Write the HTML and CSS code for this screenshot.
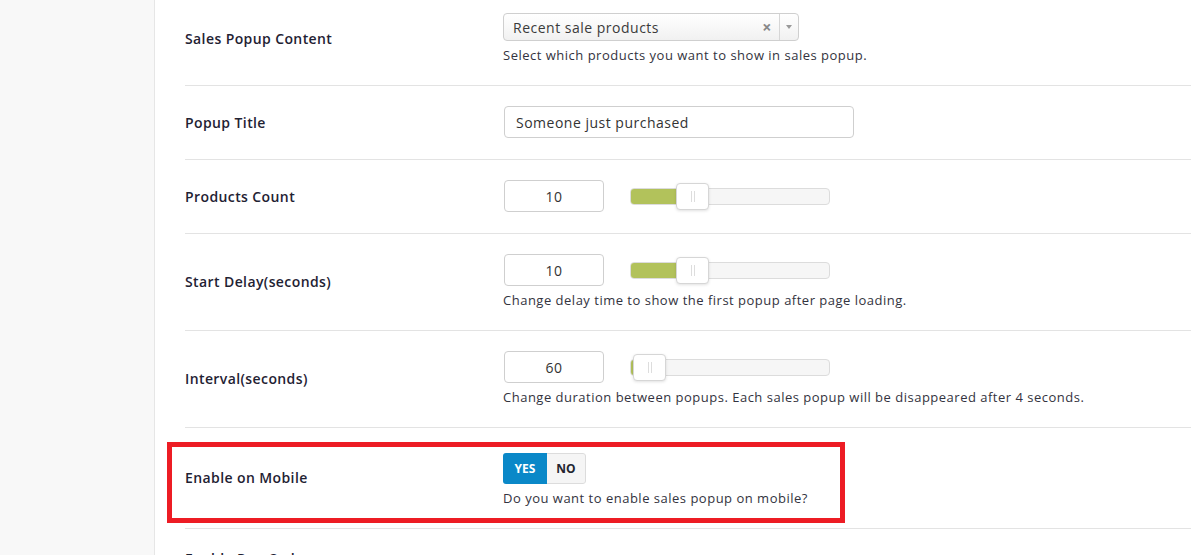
FILE: index.html
```html
<!DOCTYPE html>
<html lang="en">
<head>
    <meta charset="UTF-8">
    <meta name="viewport" content="width=device-width, initial-scale=1.0">
    <title>Sales Popup Settings</title>
    <link rel="stylesheet" href="styles.css">
</head>
<body>
    <div class="sidebar"></div>
    <main class="settings">
        <div class="row first">
            <div class="label">Sales Popup Content</div>
            <div class="field">
                <div class="select">
                    <span class="selectText">Recent sale products</span>
                    <span class="selectClear">&times;</span>
                    <span class="selectArrow"><span class="caret"></span></span>
                </div>
                <p class="desc">Select which products you want to show in sales popup.</p>
            </div>
        </div>
        <div class="row">
            <div class="label">Popup Title</div>
            <div class="field">
                <input class="textInput" type="text" value="Someone just purchased">
            </div>
        </div>
        <div class="row">
            <div class="label">Products Count</div>
            <div class="field">
                <div class="sliderLine">
                    <input class="numInput" type="text" value="10">
                    <div class="track">
                        <div class="fill" style="width: 62px"></div>
                        <div class="handle" style="left: 45px"></div>
                    </div>
                </div>
            </div>
        </div>
        <div class="row">
            <div class="label">Start Delay(seconds)</div>
            <div class="field">
                <div class="sliderLine">
                    <input class="numInput" type="text" value="10">
                    <div class="track">
                        <div class="fill" style="width: 62px"></div>
                        <div class="handle" style="left: 45px"></div>
                    </div>
                </div>
                <p class="desc">Change delay time to show the first popup after page loading.</p>
            </div>
        </div>
        <div class="row">
            <div class="label">Interval(seconds)</div>
            <div class="field">
                <div class="sliderLine">
                    <input class="numInput" type="text" value="60">
                    <div class="track">
                        <div class="fill" style="width: 10px"></div>
                        <div class="handle" style="left: 2px"></div>
                    </div>
                </div>
                <p class="desc">Change duration between popups. Each sales popup will be disappeared after 4 seconds.</p>
            </div>
        </div>
        <div class="row mobile">
            <div class="label">Enable on Mobile</div>
            <div class="field">
                <div class="toggle">
                    <span class="opt on">YES</span>
                    <span class="opt">NO</span>
                </div>
                <p class="desc">Do you want to enable sales popup on mobile?</p>
            </div>
            <div class="highlight"></div>
        </div>
        <div class="row">
            <div class="label">Enable Pop Order</div>
            <div class="field"></div>
        </div>
    </main>
</body>
</html>
```

FILE: styles.css
```css
html, body {
    height: 100%;
}

body {
    margin: 0;
    display: flex;
    overflow: hidden;
    background-color: white;
    font-family: "Open Sans", "Noto Sans", sans-serif;
    color: #23252f;
}

.sidebar {
    width: 154px;
    flex-shrink: 0;
    background-color: #f8f8f8;
    border-right: 1px solid #e6e6e6;
}

.settings {
    flex: 1;
    padding-left: 30px;
    margin-top: -7px;
}

.row {
    display: flex;
    align-items: center;
    padding: 20px 0 21px;
    border-bottom: 1px solid #e3e3e3;
}

.label {
    width: 318px;
    flex-shrink: 0;
    font-size: 14px;
    font-weight: 600;
    letter-spacing: 0.4px;
    color: #1f2233;
}

.field {
    display: flex;
    flex-direction: column;
    align-items: flex-start;
}

.desc {
    margin: 5px 0 0;
    font-size: 13px;
    line-height: 18px;
    letter-spacing: 0.5px;
    color: #333340;
}

/* select box */
.select {
    width: 294px;
    height: 26px;
    display: flex;
    align-items: center;
    border: 1px solid #cfcfcf;
    border-radius: 4px;
    background: linear-gradient(#ffffff, #f1f1f1);
    font-size: 14px;
    letter-spacing: 0.5px;
    color: #3b3b3b;
}

.selectText {
    flex: 1;
    padding-left: 9px;
}

.selectClear {
    width: 16px;
    font-size: 16px;
    font-weight: bold;
    color: #888;
    text-align: center;
    margin-right: 4px;
}

.selectArrow {
    width: 18px;
    height: 100%;
    border-left: 1px solid #d6d6d6;
    display: flex;
    align-items: center;
    justify-content: center;
}

.caret {
    width: 0;
    height: 0;
    border-left: 3px solid transparent;
    border-right: 3px solid transparent;
    border-top: 4px solid #999;
}

/* inputs */
.textInput, .numInput {
    box-sizing: border-box;
    height: 32px;
    margin-left: 1px;
    border: 1px solid #cfcfcf;
    border-radius: 4px;
    font-family: inherit;
    font-size: 14px;
    letter-spacing: 0.5px;
    color: #333;
    outline: none;
}

.textInput {
    width: 350px;
    padding: 0 11px;
}

.numInput {
    width: 100px;
    text-align: center;
}

.sliderLine {
    display: flex;
    align-items: center;
}

.track {
    position: relative;
    box-sizing: border-box;
    width: 200px;
    height: 17px;
    margin-left: 26px;
    border: 1px solid #dcdcdc;
    border-radius: 4px;
    background-color: #f6f6f6;
}

.fill {
    height: 100%;
    border-radius: 3px 0 0 3px;
    background-color: #b2c25b;
}

.handle {
    position: absolute;
    top: -6px;
    box-sizing: border-box;
    width: 33px;
    height: 27px;
    border: 1px solid #d6d6d6;
    border-radius: 4px;
    background-color: white;
    box-shadow: 0 1px 3px rgba(0, 0, 0, 0.12);
}

.handle::after {
    content: "";
    position: absolute;
    left: 14px;
    top: 7px;
    width: 2px;
    height: 11px;
    border-left: 1px solid #ddd;
    border-right: 1px solid #ddd;
}

/* yes / no toggle */
.mobile {
    position: relative;
    padding-top: 25px;
}

.mobile .label {
    margin-top: -6px;
}

.toggle {
    display: flex;
    height: 31px;
    border-radius: 3px;
    overflow: hidden;
}

.opt {
    display: flex;
    align-items: center;
    justify-content: center;
    width: 38px;
    font-size: 12px;
    font-weight: 700;
    color: #23252f;
    background-color: #f5f5f5;
    border: 1px solid #dcdcdc;
    border-left: none;
    border-radius: 0 3px 3px 0;
}

.opt.on {
    width: 44px;
    color: white;
    background-color: #0a88c8;
    border: none;
    border-radius: 0;
}

.highlight {
    position: absolute;
    left: -18px;
    top: 14px;
    width: 678px;
    height: 81px;
    box-sizing: border-box;
    border: 5px solid #ed1c24;
}
```
